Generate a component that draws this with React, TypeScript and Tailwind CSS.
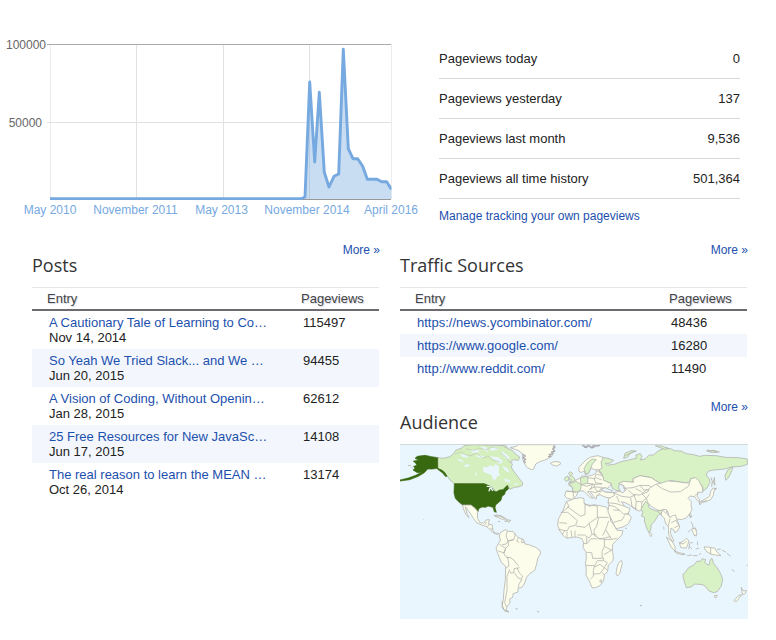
import React from "react";

const posts = [
  { title: "A Cautionary Tale of Learning to Co…", date: "Nov 14, 2014", views: "115497" },
  { title: "So Yeah We Tried Slack... and We …", date: "Jun 20, 2015", views: "94455" },
  { title: "A Vision of Coding, Without Openin…", date: "Jan 28, 2015", views: "62612" },
  { title: "25 Free Resources for New JavaSc…", date: "Jun 17, 2015", views: "14108" },
  { title: "The real reason to learn the MEAN …", date: "Oct 26, 2014", views: "13174" },
];

const sources = [
  { url: "https://news.ycombinator.com/", views: "48436" },
  { url: "https://www.google.com/", views: "16280" },
  { url: "http://www.reddit.com/", views: "11490" },
];

const stats = [
  ["Pageviews today", "0"],
  ["Pageviews yesterday", "137"],
  ["Pageviews last month", "9,536"],
  ["Pageviews all time history", "501,364"],
];

const line =
  "50,198.8 301,198.8 305,197 309.7,82 314.7,162 319.3,92.3 324.3,172.3 329,187 334,176.3 338.7,174 343.3,49.3 348.3,148.7 353,158.7 357.7,158.7 362.7,166.3 367.3,179.3 377,179.3 381.7,181.7 386.7,181.7 391.5,189.5";

const ticks = [
  [50, "May 2010"],
  [135.5, "November 2011"],
  [221.5, "May 2013"],
  [307, "November 2014"],
  [391, "April 2016"],
] as const;

function Chart() {
  return (
    <svg className="block h-[236px] w-[420px] shrink-0" viewBox="0 0 420 236">
      <g fill="none" stroke="#e2e2e2" strokeWidth="1">
        <path d="M136.5 44V199M223.5 44V199M309.5 44V199" />
        <path d="M50.5 44V199M391.5 44V199" stroke="#ececec" />
        <path d="M47 122.5H391" />
      </g>
      <path d="M47 44.5H391" stroke="#aaa" />
      <path d="M50 199.5H391" stroke="#999" />
      <clipPath id="plot">
        <rect x="50" y="40" width="341.5" height="160" />
      </clipPath>
      <g clipPath="url(#plot)">
        <polygon points={line + " 391.5,199 50,199"} fill="#76a9df" fillOpacity=".4" />
        <polyline points={line} fill="none" stroke="#76a9df" strokeWidth="2.9" strokeLinejoin="round" />
      </g>
      <g className="font-['Liberation_Sans',sans-serif] text-[12px]">
        <text x="46" y="49" textAnchor="end" fill="#666">100000</text>
        <text x="42" y="127" textAnchor="end" fill="#666">50000</text>
        {ticks.map(([x, label]) => (
          <text key={label} x={x} y="214" textAnchor="middle" fill="#76a9df">{label}</text>
        ))}
      </g>
    </svg>
  );
}

function WorldMap() {
  return (
    <svg className="block h-[175px] w-[348px] bg-[#eaf6fd]" viewBox="0 0 1044 525">
      <g fill="#fdfdec" stroke="#b4b4b0" strokeWidth="2.4" strokeLinejoin="round">
        {/* North America */}
        <g transform="translate(-15 -147)">
          <path fill="#d5efbf" d="M128 188L145 190 165 185 176 176 182 166 198 160 208 152 235 149 330 152 336 160 350 165 365 180 374 186 370 196 355 194 346 200 352 208 349 217 357 230 365 240 376 255 383 263 382 271 370 276 358 277 345 283 338 271 322 286 304 291 290 276 268 267 178 266 165 255 155 241 144 230 128 220Z" />
          <path fill="#eaf6fd" stroke="none" d="M263 216L276 217 285 211 297 215 301 207 312 214 311 233 316 241 305 246 302 254 293 253 291 241 280 236 266 231ZM196 176l18 4 6 8-18-3zM225 166l22-2 8 7-20 3zM255 154l20 3 3 14-11-7zM282 160l20-5 9 8-20 5zM244 180l22 3-3 6-18-4zM285 183l24 4 15 12-8 8-20-14zM187 191l12 3 10 8-18-5zM205 212l14-5 6 4-12 6zM320 168l18 13 8 12-11-2-15-15zM320 213l17 6 8 16-13-8zM327 250l16 5 4 8-16-4zM239 229l8 11-5 2zM355 266l13-2-5 7z" />
          <path fill="none" strokeWidth="1.3" d="M180 177l18-6 12 8 18 3 16-8 18 15 20-5 12 12 22 4M213 161l22 6 18-8 20 5 18-8 18 4M315 174l18 11 10 18 10-2M320 154l10-5 9 7-12 2" />
          <path fill="#38680f" stroke="#38680f" strokeWidth="2" d="M178 266H268L279 271 290 276 293 285 303 291 314 285 324 284 337 271 341 281 331 290 329 298 321 304 318 316 302 330 300 338 304 352 298 350 294 337 279 333 272 337 261 336 251 341 249 350 240 340 228 330 203 330 189 319 181 310 177 294ZM128 188L110 185 90 181 67 184 60 190 72 196 55 198 62 205 66 211 56 214 60 220 54 225 67 233 80 232 62 241 40 249 15 255V258L44 254 70 244 88 233 98 222 112 222 128 220 140 225 149 232 156 244 151 244 143 234 128 223Z" />
          <path fill="none" stroke="#edf7f5" strokeWidth="4" d="M275 274l10 1 7 4M282 289l2-8 6-1M289 281l4 7" />
          <path d="M203 330L228 330 240 340 248 349 247 370 256 384 267 384 273 375 283 374 280 387 292 390 292 404 299 414 311 415 308 419 293 412 286 404 275 395 260 390 245 383 236 371 225 354 211 335 216 356 222 368 213 359 205 341ZM300 364l18-2 16 10-12 1-13-6zM333 374l15 2-7 4zM85 374l3 1" />
          <path fill="none" d="M269 390l6-9M275 395l10-7M286 402l9-1" />
          <path d="M39 211l9 1M49 216l5 4" />
        </g>

        {/* Europe, Greenland and Russia */}
        <g transform="translate(330 -147)">
          <path d="M0 158L20 154 25 149H136L130 158 132 170 124 185 108 194 89 200 77 207 71 222 65 224 52 218 44 207 37 190 38 176 24 166ZM121 205L132 200 149 201 152 207 140 213 128 210Z" />
          <path fill="none" stroke="#aaaab0" strokeWidth="4" d="M39 178l7 5-7 5 8 5-6 5 6 6M129 153l6 4-7 5 6 6-9 3 3 6-10 1 4 6-8 1M216 151l14 5 4-5 10 7 6-6 10 1 10-2M222 156l10 2M238 152l8 7 8-3" />
          <path fill="#d8f1c5" d="M277 187L294 190 311 196 299 205 286 205 292 211 316 207 336 199 353 196 369 192 380 190 377 181 391 176 396 185 390 195 405 192 418 180 430 180 443 169 466 158 484 162 493 167 513 168 529 176 551 179 568 184 584 181 618 182 647 187 685 188 712 192 712 208 694 214 668 216 666 226 657 246 647 256 645 241 653 225 669 215 644 222 611 225 596 228 588 240 597 250 600 262 591 279 580 288 578 275 566 259 552 249 543 251 539 264 518 262 499 259 480 256 471 265 452 265 437 257 424 248 390 242 369 251 370 262 341 259 328 266 326 278 331 288 318 286 306 279 304 266 281 256 276 238 266 224 275 211 270 202Z" />
          <path fill="#d8f1c5" d="M341 190l4-15 18-8 16 1-17 6-10 13zM436 152l20 1 20 8-13 2zM590 168l22-2 16 5-20 2zM613 247l2 24-5-8zM346 182l28-13" />
          <path d="M207 230L206 218 216 207 229 194 243 186 264 182 280 188 273 201 276 219 266 225 252 224 244 218 236 234 226 241 223 228 215 232Z" />
          <path fill="#d8f1c5" d="M227 236L222 221 231 205 246 192 259 194 247 207 242 220 235 236Z" />
          <path fill="#d8f1c5" d="M180 230L188 235 185 241 195 252 192 260 176 262 184 255 177 251 182 242 175 236ZM166 246L174 243 177 255 168 259 163 253Z" />
          <path d="M176 265L194 257 211 249 216 242 225 245 246 241 257 235 261 222 270 230 279 246 281 256 304 266 299 274 292 280 273 278 272 285 286 291 310 293 318 303 309 311 288 307 278 303 270 299 260 303 258 313 249 301 239 289 232 290 242 301 250 310 243 309 231 298 222 289 212 287 204 291 199 303 187 313 172 310 164 303 168 288 188 290 187 278 176 270Z" />
          <path fill="#d8f1c5" d="M178 267L198 259 214 269 211 286 201 291 187 289 188 278ZM211 249L228 244 234 248 233 265 213 269Z" />
          <path fill="none" d="M170 288L199 292M190 289V307M214 269l16 5 18-7M233 265l22 3 21-1M232 248l23 3 2-12M252 250l5 14 20 2M237 283l17-7 18 1M253 268v9l8 12 13 1M241 289l17 4 14-8M260 303l10-10M248 267l-6 17M262 229l13 6M258 238l19 3M258 248l17 7" />
          <path fill="#eaf6fd" d="M275 282l12-4 6 4 15 5-6 5-20-2zM341 266l11 2-3 10 6 9-8 3-7-15-5-5z" />
          {/* Middle East and central Asia */}
          <path d="M326 266L341 259 370 262 369 251 390 242 424 248 437 257 452 265 441 279 438 289 425 301 420 315 410 336 400 345 388 348 376 343 359 330 346 323 334 320 345 335 360 340 354 359 326 373 310 349 294 323 296 311 314 301 310 293 327 289 339 293 349 284 340 271Z" />
          <path fill="none" d="M341 280l28-2 21-7 28 1 10 8M355 286l15 13 20 1 19-15 14 0M310 293l25 11 25 3 17-8M320 303l8 20M294 323l25 3 25 8M327 363l29-9M362 308l4 27 15 8M371 299l8 20-3 24M379 319l17 2 22-18M396 321l-2 23M390 272l12 13 28-3M377 281l18 9" />
        </g>

        {/* China and the Far East */}
        <g transform="translate(675 -147)">
          <path d="M51 297L68 291 74 279 94 267 107 265 128 258 156 260 174 263 191 264 198 251 211 248 221 256 232 277 233 292 220 291 216 304 225 315 219 319 209 305 195 303 189 310 199 320 198 333 201 343 194 357 183 369 169 374 156 372 145 376 133 366 128 348 115 347 100 346 85 338 70 326 64 310Z" />
          <path fill="none" d="M94 268l18 13 25 10 29-1 25-17 6-22M221 292l-12 10M199 321M64 310l9-12" />
          <path d="M257 289L264 279 274 281 267 287 265 301 257 314 245 319 230 323 225 329 222 322 239 313 254 304ZM195 358l5 7-4 4z" />
          <path fill="none" strokeWidth="3" d="M258 248l4 11-2 16M275 279l-8 5M223 324l4 5M246 164l8 4 13-1 8 4" />
        </g>

        {/* South America */}
        <g transform="translate(-15 198)">
          <path d="M315 69L328 61 333 58 337 64 354 64 360 72 370 83 385 88 390 102 401 104 422 112 435 122 437 131 428 145 425 162 419 181 405 190 395 201 389 219 380 233 369 234 369 246 354 251 353 262 344 267 345 279 337 288 333 298 342 306 331 304 321 292 325 267 327 240 331 211 332 169 319 157 308 130 303 114 310 102 316 91 313 78Z" />
          <path fill="none" d="M337 64l-4 14 6 14 17-3 5-18M370 83l-5 10 8 5M381 87l-1 11 10-2M313 103l19 12-4 14-18-6M339 92l-5 10-13 2M356 89l-17 5 2 12-9 9-6 15 9 13 10-1 12 8 8 12 7 5M338 140l4 28-9 6M342 178l6 12 9-3 0-11 17-3M367 174l6 15 10 9-4 10-11-5-9-14M381 208l-9 14-2 10M342 184l-6 15 0 42-7 36 5 14" />
          <path fill="none" strokeWidth="3" d="M321 274l1 12 5 14 11 4M362 296l6 1M426 303l6 4M296 17l12-2 20 10M310 34l5 1M328 33l10 1M342 37l1 2" />
        </g>

        {/* Africa and Arabia */}
        <g transform="translate(450 168)">
          <path d="M49 5L73-4 92-7 102-4 102 10 120 19 130 14 145 16 169 21 175 31 180 45 182 63 191 74 201 91 219 92 216 104 200 121 188 133 187 149 190 169 189 182 175 195 173 214 163 225 161 242 150 257 137 263 126 263 119 246 108 225 109 205 106 191 109 174 108 157 99 142 101 129 96 116 81 111 67 112 50 115 40 107 28 90 23 75 25 57 37 36Z" />
          <path d="M176 16L193 19 210 32 220 42 237 43 244 53 235 72 216 82 198 86 188 66 174 36Z" />
          <path fill="none" d="M49 5l8 14-20 17M32 37h21l29 25-5 14-19 4-7 13-24-5M52 20l40 29 13-5 0-34M105 14l37 4v35l-25 17-12 12-27-4M117 70l9 32-9 12-14-9-21 0M142 52h34M146 53l-6 25-8 13 2 16 17 10 30-7M176 63l-9 26 18 29 16-3M142 117l-19-1-12 15-10-1M143 116l20 1 0 22 22 12M162 119l23-1M110 157l15 1 3 17 29 0-1-20 7-16M108 196l26 1 8-15 17 0 2-9M134 197l-4 14 0 18-9 8M134 201l16-8 13 11-14 17-18 1M160 181l12 7-9 15 10 9M163 225l-7-8M149 242l5-3 2 6-5 2zM126 102l14 4M110 112v17M44 92l-8 13M51 95v19M63 91l3 21M75 92v19M28 68l23 2M190 67l26-7 8-14M208 31l-18-1M187 149l-25 15M167 89l-9 18" />
          <path d="M202 198L206 189 214 181 217 190 209 221 202 228 198 219Z" />
          <path fill="none" strokeWidth="3" d="M226 85h5M271 316h4" />
        </g>

        {/* South Asia and Oceania */}
        <g transform="translate(720 168)">
          <path fill="#d8f1c5" d="M17 4L25 13 28 24 48 33 69 30 65 39 55 45 45 62 34 74 32 90 27 98 21 87 13 63 14 52 4 48 9 36 3 28Z" />
          <path d="M68 28L79 29 81 41 90 53 98 47 107 45 109 55 114 67 119 81 112 94 104 98 102 90 93 84 91 98 96 111 102 123 96 124 86 103 85 78 77 72 73 54 62 45ZM30 97l6 6-3 7-5-7z" />
          <path fill="none" d="M85 77l5-21M94 68l14-7 10 18M103 83l11-5M52 33l14 12M68 30l10 11" />
          <path d="M79 111L96 124 105 139 106 154 94 142ZM118 128L129 125 139 115 146 121 144 132 138 145 122 142ZM192 141L205 141 225 145 231 156 243 167 226 165 212 162 198 153ZM104 154L126 160 136 163 126 164 108 159Z" />
          <path fill="none" d="M147 129l11-1M149 132l-3 16M149 140l7 7M172 125l1 11M167 147l11-3M141 167l15-2M159 167l14 0M212 143v20M118 129l11 3 11-8M153 65l6 12 0 8M157 91l8-8 5 8M144 98l7-9M162 98l4 9 5 0M231 148l11 0M246 150l12 7M261 160l11 9M276 207l7 9M71 80l1 9M183 160l-6 4" />
          <path d="M147 42l5 0 2 7-5 0zM155 87l11-2 5 17-7 6-5-11z" />
          <path fill="#d8f1c5" d="M137 215L146 203 163 194 170 184 181 184 187 176 197 179 194 188 207 196 211 179 216 175 221 191 231 203 242 221 248 237 244 258 232 275 220 278 207 273 197 260 188 254 165 252 153 261 139 263 130 236 129 223Z" />
          <path d="M223 286l9 0-3 7-4 0zM304 262l5 10 10 0-4 9-7 3-2-9zM305 283l-5 8-11 14-7-3 10-12zM177 7l24-5" />
          <path fill="none" d="M320 196h4M0 317h4" />
        </g>
      </g>
      <path d="M0 1H1044" stroke="#cdd5d3" strokeWidth="3" />
    </svg>
  );
}

function SectionHead({ title }: { title: string }) {
  return (
    <header className="flex h-[46px] flex-col">
      <a className="h-[14px] self-end text-[12px] leading-[18px] text-[#1c50ae]">More »</a>
      <h2 className="font-['Open_Sans','Noto_Sans',sans-serif] text-[18px] leading-[20px] text-[#333]">{title}</h2>
    </header>
  );
}

function TableHead() {
  return (
    <div className="mr-px flex h-[24px] border-t border-b-2 border-t-[#e6e6e6] border-b-[#6d6b70] pl-[15px] text-[13px] leading-[21px] text-[#444] [text-shadow:1px_1px_1px_#d3d7e5]">
      <span className="w-[254px]">Entry</span>
      <span>Pageviews</span>
    </div>
  );
}

export default function App() {
  return (
    <main className="h-[640px] w-[776px] overflow-hidden bg-white font-['Liberation_Sans',Arial,sans-serif] text-[13px] text-[#222]">
      <div className="flex h-[241px]">
        <Chart />
        <section className="ml-[19px] w-[301px] pt-[39px]">
          {stats.map(([label, value]) => (
            <div key={label} className="flex h-[40px] items-center justify-between border-b border-[#d8d8d8]">
              <span>{label}</span>
              <span>{value}</span>
            </div>
          ))}
          <a className="block pt-[8px] text-[12px] leading-[18px] text-[#1c50ae]">Manage tracking your own pageviews</a>
        </section>
      </div>
      <div className="flex gap-[20px] pl-[32px]">
        <section className="w-[348px]">
          <SectionHead title="Posts" />
          <TableHead />
          {posts.map((p) => (
            <div key={p.title} className="mr-px flex h-[38px] pt-[4px] pl-[17px] leading-[15px] odd:bg-white even:bg-[#f3f7fd]">
              <div className="w-[254px]">
                <a className="block text-[#1c50ae]">{p.title}</a>
                <span className="block">{p.date}</span>
              </div>
              <span>{p.views}</span>
            </div>
          ))}
        </section>
        <section className="w-[348px]">
          <SectionHead title="Traffic Sources" />
          <TableHead />
          {sources.map((s) => (
            <div key={s.url} className="mr-px flex h-[23px] pl-[17px] leading-[23px] odd:bg-white even:bg-[#f3f7fd]">
              <a className="w-[254px] text-[#1c50ae]">{s.url}</a>
              <span>{s.views}</span>
            </div>
          ))}
          <div className="pt-[18px]">
            <SectionHead title="Audience" />
            <WorldMap />
          </div>
        </section>
      </div>
    </main>
  );
}
